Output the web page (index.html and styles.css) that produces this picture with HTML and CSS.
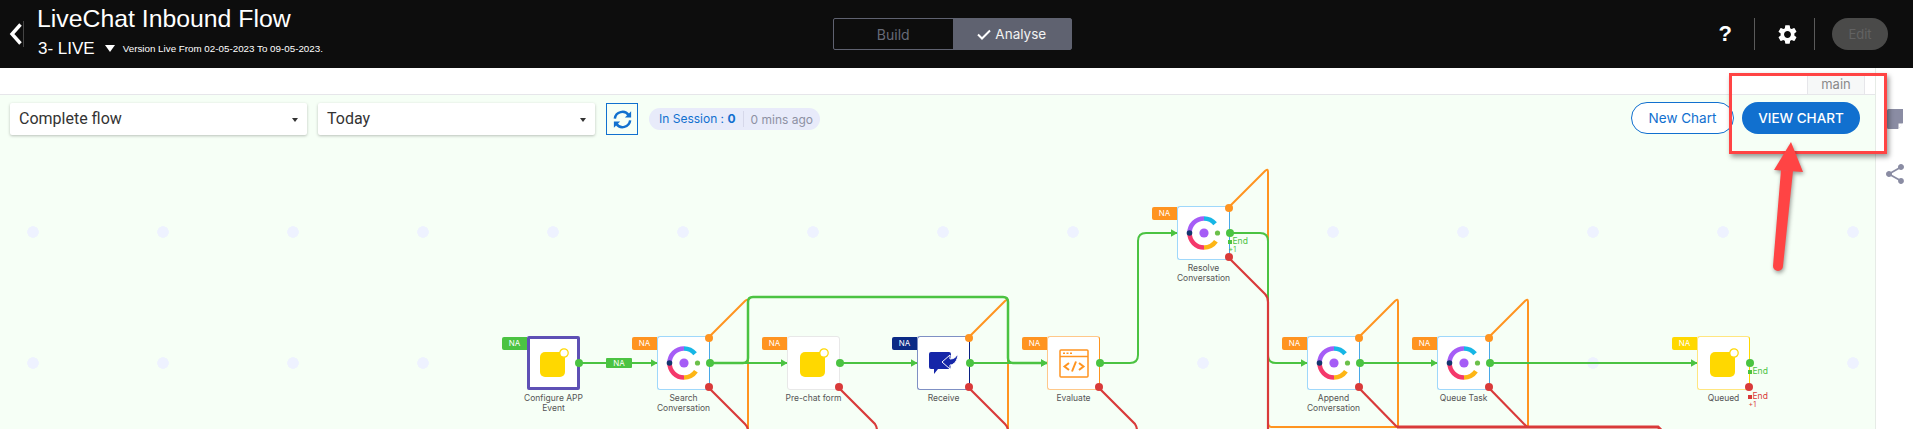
FILE: index.html
```html
<!doctype html>
<html lang="en">
<head>
    <meta charset="UTF-8">
    <title>LiveChat Inbound Flow</title>
    <link rel="stylesheet" href="styles.css">
</head>
<body>
    <svg class="defs" width="0" height="0">
        <symbol id="logo-c" viewBox="0 0 36 36">
            <g fill="none" stroke-width="4.6">
                <path d="M3.5 18A14.5 14.5 0 0 1 18 3.5" stroke="#a55cf6"/>
                <path d="M18 3.5A14.5 14.5 0 0 1 29.1 8.7" stroke="#17b6e6"/>
                <path d="M3.5 18A14.5 14.5 0 0 0 18 32.5" stroke="#f4396c"/>
                <path d="M18 32.5A14.5 14.5 0 0 0 29.9 26.3" stroke="#fdb515"/>
            </g>
            <circle cx="3.5" cy="18" r="2.8" fill="#12366f"/>
            <circle cx="18" cy="18" r="4.6" fill="#a55cf6"/>
            <circle cx="31.5" cy="18" r="2.6" fill="#6cc04a"/>
        </symbol>
        <symbol id="logo-app" viewBox="0 0 30 30">
            <rect x="1" y="4" width="25" height="25" rx="5" fill="#ffd800"/>
            <circle cx="25" cy="5" r="4.2" fill="#fff" stroke="#ffd800" stroke-width="1.2"/>
        </symbol>
        <marker id="arrow" markerUnits="userSpaceOnUse" markerWidth="7" markerHeight="8" refX="6.5" refY="4" orient="auto">
            <path d="M0 0L7 4L0 8Z" fill="#4bc342"/>
        </marker>
    </svg>

    <div class="app">
        <header class="topbar">
            <div class="flow-info">
                <svg class="back" viewBox="0 0 14 22" width="15" height="26">
                    <path d="M11.5 1.500L3 11L11.5 20.500" fill="none" stroke="#fff" stroke-width="3.4"/>
                </svg>
                <div class="flow-info__text">
                    <h1>LiveChat Inbound Flow</h1>
                    <div class="version">
                        <span class="version__name">3- LIVE</span>
                        <span class="version__caret"></span>
                        <span class="version__dates">Version Live From 02-05-2023 To 09-05-2023.</span>
                    </div>
                </div>
            </div>
            <div class="mode">
                <span class="mode__item">Build</span>
                <span class="mode__item mode__item--on">
                    <svg viewBox="0 0 14 11" width="14" height="11"><path d="M1 5.5L5 9.5L13 1.5" fill="none" stroke="#fff" stroke-width="2"/></svg>
                    Analyse
                </span>
            </div>
            <div class="tools">
                <span class="tools__help">?</span>
                <span class="tools__sep"></span>
                <svg class="tools__gear" viewBox="0 0 24 24" width="23" height="23">
                    <path fill="#fff" d="M19.14 12.94c.04-.3.06-.61.06-.94 0-.32-.02-.64-.07-.94l2.03-1.58a.49.49 0 0 0 .12-.61l-1.92-3.32a.488.488 0 0 0-.59-.22l-2.39.96c-.5-.38-1.03-.7-1.62-.94l-.36-2.54a.484.484 0 0 0-.48-.41h-3.84c-.24 0-.43.17-.47.41l-.36 2.54c-.59.24-1.13.57-1.62.94l-2.39-.96c-.22-.08-.47 0-.59.22L2.74 8.87c-.12.21-.08.47.12.61l2.03 1.58c-.05.3-.09.63-.09.94s.02.64.07.94l-2.03 1.58a.49.49 0 0 0-.12.61l1.92 3.32c.12.22.37.29.59.22l2.39-.96c.5.38 1.03.7 1.62.94l.36 2.54c.05.24.24.41.48.41h3.84c.24 0 .44-.17.47-.41l.36-2.54c.59-.24 1.13-.56 1.62-.94l2.39.96c.22.08.47 0 .59-.22l1.92-3.32c.12-.22.07-.47-.12-.61l-2.01-1.58zM12 15.6c-1.98 0-3.6-1.62-3.6-3.6s1.62-3.6 3.6-3.6 3.6 1.62 3.6 3.6-1.62 3.6-3.6 3.6z"/>
                </svg>
                <span class="tools__sep"></span>
                <span class="tools__edit">Edit</span>
            </div>
        </header>

        <div class="workspace">
            <div class="board">
                <div class="tabs"><span class="tabs__item">main</span></div>
                <main class="canvas">
                    <div class="toolbar">
                        <div class="select select--flow">Complete flow<span class="select__caret"></span></div>
                        <div class="select select--range">Today<span class="select__caret"></span></div>
                        <button type="button" class="refresh">
                            <svg viewBox="0 0 24 24" width="23" height="23" fill="none" stroke="#1170cf" stroke-width="2.6">
                                <path d="M4 11A8 8 0 0 1 18.5 7.5"/>
                                <path d="M20 13A8 8 0 0 1 5.5 16.5"/>
                                <path d="M21 3.5V10H14.500Z" fill="#1170cf" stroke="none"/>
                                <path d="M3 20.500V14H9.500Z" fill="#1170cf" stroke="none"/>
                            </svg>
                        </button>
                        <div class="session">
                            <span class="session__count">In Session : <b>0</b></span>
                            <span class="session__ago">0 mins ago</span>
                        </div>
                        <button type="button" class="btn btn--outline">New Chart</button>
                        <button type="button" class="btn btn--solid">VIEW CHART</button>
                    </div>
                </main>
            </div>
            <aside class="rail">
                <svg viewBox="0 0 16 20" width="16" height="20">
                    <path d="M0 1.5A1.5 1.5 0 0 1 1.5 0H16V14L11 20H1.5A1.5 1.5 0 0 1 0 18.5Z" fill="#8a8ca3"/>
                    <path d="M11.5 19.5V14.5H16Z" fill="#fff"/>
                </svg>
                <svg viewBox="0 0 24 24" width="24" height="24">
                    <path fill="#8a8ca3" d="M18 16.08c-.76 0-1.44.3-1.96.77L8.91 12.7c.05-.23.09-.46.09-.7s-.04-.47-.09-.7l7.05-4.11c.54.5 1.25.81 2.04.81 1.66 0 3-1.34 3-3s-1.34-3-3-3-3 1.34-3 3c0 .24.04.47.09.7L8.04 9.81C7.5 9.31 6.79 9 6 9c-1.66 0-3 1.34-3 3s1.34 3 3 3c.79 0 1.5-.31 2.04-.81l7.12 4.16c-.05.21-.08.43-.08.65 0 1.61 1.31 2.92 2.92 2.92 1.61 0 2.92-1.31 2.92-2.92s-1.31-2.92-2.92-2.92z"/>
                </svg>
            </aside>
        </div>

        <!-- flow diagram, coordinates are page pixels -->
        <svg class="wires" viewBox="0 0 1913 429" width="1913" height="429" fill="none">
            <g stroke="#ff9420" stroke-width="2">
                <path d="M708 338L745 301Q748 298 748 302V429"/>
                <path d="M968 338L1005 301Q1008 298 1008 302V429"/>
                <path d="M1228 208L1265 171Q1268 168 1268 172V423Q1268 427 1272 427H1398"/>
                <path d="M1358 338L1395 301Q1398 298 1398 302V427"/>
                <path d="M1488 338L1525 301Q1528 298 1528 302V427"/>
            </g>
            <g stroke="#4bc342" stroke-width="2">
                <path d="M579 363H657" marker-end="url(#arrow)"/>
                <path d="M709 363H787" marker-end="url(#arrow)"/>
                <path d="M709 363H743Q748 363 748 358V302Q748 297 753 297H1003Q1008 297 1008 302V358Q1008 363 1013 363H1047" stroke-width="2.5" marker-end="url(#arrow)"/>
                <path d="M839 363H917" marker-end="url(#arrow)"/>
                <path d="M969 363H1047" marker-end="url(#arrow)"/>
                <path d="M1099 363H1130Q1138 363 1138 355V241Q1138 233 1146 233H1177" marker-end="url(#arrow)"/>
                <path d="M1229 233H1260Q1268 233 1268 241V355Q1268 363 1276 363H1307" marker-end="url(#arrow)"/>
                <path d="M1359 363H1437" marker-end="url(#arrow)"/>
                <path d="M1489 363H1697" marker-end="url(#arrow)"/>
            </g>
            <g stroke="#d93a3a" stroke-width="2.2">
                <path d="M708 387L745 424Q748 427 748 431"/>
                <path d="M838 387L875 424Q877 427 877 431"/>
                <path d="M968 387L1005 424Q1008 427 1008 431"/>
                <path d="M1098 387L1135 424Q1137 427 1137 431"/>
                <path d="M1228 257L1265 294Q1268 297 1268 302V429"/>
                <path d="M1358 387L1397 427"/>
                <path d="M1488 387L1527 427"/>
                <path d="M1397 427H1658L1662 431" stroke-width="3"/>
            </g>
        </svg>

        <div class="node node--configure">
            <span class="badge badge--green">NA</span>
            <div class="node__box node__box--selected">
                <svg width="30" height="30"><use href="#logo-app"/></svg>
                <span class="port port--ok"></span>
            </div>
            <p class="node__label">Configure APP Event</p>
        </div>
        <span class="wire-tag">NA</span>

        <div class="node node--search">
            <span class="badge badge--orange">NA</span>
            <div class="node__box node__box--blue">
                <svg width="36" height="36"><use href="#logo-c"/></svg>
                <span class="port port--warn"></span><span class="port port--ok"></span><span class="port port--err"></span>
            </div>
            <p class="node__label">Search Conversation</p>
        </div>

        <div class="node node--prechat">
            <span class="badge badge--orange">NA</span>
            <div class="node__box node__box--grey">
                <svg width="30" height="30"><use href="#logo-app"/></svg>
                <span class="port port--ok"></span><span class="port port--err"></span>
            </div>
            <p class="node__label">Pre-chat form</p>
        </div>

        <div class="node node--receive">
            <span class="badge badge--navy">NA</span>
            <div class="node__box node__box--navy">
                <svg viewBox="0 0 29 22" width="29" height="22">
                    <path d="M0 2Q0 0 2 0H20Q22 0 22 2V15Q22 17 20 17H9L5 22V17H2Q0 17 0 15Z" fill="#1526a8"/>
                    <path d="M13 10L21 3V7C25 7 27 5 29 2C28.500 9 25 13 21 13V17Z" fill="#1526a8" stroke="#fff" stroke-width="1"/>
                </svg>
                <span class="port port--warn"></span><span class="port port--ok"></span><span class="port port--err"></span>
            </div>
            <p class="node__label">Receive</p>
        </div>

        <div class="node node--evaluate">
            <span class="badge badge--orange">NA</span>
            <div class="node__box node__box--orange">
                <svg viewBox="0 0 30 29" width="30" height="29" fill="none" stroke="#ff9420" stroke-width="1.500">
                    <rect x="1" y="1" width="28" height="27" rx="1"/>
                    <path d="M1 7.500H29"/>
                    <path d="M4 4.300H6M7.500 4.300H9.500M11 4.300H13"/>
                    <path d="M10 14L5.500 17.500L10 21M20 14L24.500 17.500L20 21M17 12.500L13 22.500" stroke-width="2"/>
                </svg>
                <span class="port port--ok"></span><span class="port port--err"></span>
            </div>
            <p class="node__label">Evaluate</p>
        </div>

        <div class="node node--resolve">
            <span class="badge badge--orange">NA</span>
            <div class="node__box node__box--blue">
                <svg width="36" height="36"><use href="#logo-c"/></svg>
                <span class="port port--warn"></span><span class="port port--ok"></span><span class="port port--err"></span>
                <span class="end end--ok">End<small>+1</small></span>
            </div>
            <p class="node__label">Resolve Conversation</p>
        </div>

        <div class="node node--append">
            <span class="badge badge--orange">NA</span>
            <div class="node__box node__box--blue">
                <svg width="36" height="36"><use href="#logo-c"/></svg>
                <span class="port port--warn"></span><span class="port port--ok"></span><span class="port port--err"></span>
            </div>
            <p class="node__label">Append Conversation</p>
        </div>

        <div class="node node--queue">
            <span class="badge badge--orange">NA</span>
            <div class="node__box node__box--blue">
                <svg width="36" height="36"><use href="#logo-c"/></svg>
                <span class="port port--warn"></span><span class="port port--ok"></span><span class="port port--err"></span>
            </div>
            <p class="node__label">Queue Task</p>
        </div>

        <div class="node node--queued">
            <span class="badge badge--yellow">NA</span>
            <div class="node__box node__box--yellow">
                <svg width="30" height="30"><use href="#logo-app"/></svg>
                <span class="port port--ok"></span><span class="port port--err"></span>
                <span class="end end--ok">End</span>
                <span class="end end--err">End<small>+1</small></span>
            </div>
            <p class="node__label">Queued</p>
        </div>

        <!-- red annotation drawn over the screenshot -->
        <div class="callout"></div>
        <svg class="callout-arrow" viewBox="0 0 50 140" width="50" height="140">
            <path d="M26 1L38 31L9 29Z" fill="#ff4444"/>
            <path d="M16 29L28 30L18 125A5 5 0 0 1 8 125Z" fill="#ff4444"/>
        </svg>
    </div>
</body>
</html>
```

FILE: styles.css
```css
* {
    box-sizing: border-box;
}

body {
    margin: 0;
    font-family: Inter, "Noto Sans", sans-serif;
}

.defs {
    position: absolute;
}

.app {
    position: relative;
    height: 100vh;
    overflow: hidden;
    display: flex;
    flex-direction: column;
}

/* top bar */
.topbar {
    height: 68px;
    flex: none;
    background-color: #0d0d0d;
    display: grid;
    grid-template-columns: 833px 239px 1fr;
    align-items: center;
    color: #fff;
}

.flow-info {
    display: flex;
    align-items: center;
    height: 100%;
    padding-left: 9px;
    font-family: "Liberation Sans", Arial, sans-serif;
}

.back {
    margin-right: 13px;
    border-right: 1px solid #444;
}

.flow-info__text {
    margin-bottom: 7px;
}

.flow-info h1 {
    margin: 0;
    font-size: 24.8px;
    font-weight: 400;
    line-height: 30px;
}

.version {
    display: flex;
    align-items: center;
    margin-top: 6px;
    line-height: 18px;
}

.version__name {
    font-size: 17px;
    margin-left: 1px;
}

.version__caret {
    margin: 0 8px 0 10px;
    border-left: 5.500px solid transparent;
    border-right: 5.500px solid transparent;
    border-top: 7px solid #fff;
}

.version__dates {
    font-size: 9.8px;
}

.mode {
    height: 32px;
    display: flex;
    border: 1px solid #5f6270;
    border-radius: 2px;
    font-size: 14px;
}

.mode__item {
    flex: 1;
    display: flex;
    align-items: center;
    justify-content: center;
    gap: 4px;
    color: #666a78;
}

.mode__item--on {
    background-color: #5f6270;
    color: #f2f2f2;
    font-size: 13.500px;
}

.tools {
    display: flex;
    align-items: center;
    justify-content: flex-end;
    padding-right: 25px;
}

.tools__help {
    font-family: "Liberation Sans", Arial, sans-serif;
    font-size: 22px;
    font-weight: 700;
    margin-right: 22px;
}

.tools__sep {
    width: 1px;
    height: 32px;
    background-color: #5a5a5a;
}

.tools__gear {
    margin: 0 15px 0 21px;
}

.tools__edit {
    width: 56px;
    height: 32px;
    margin-left: 17px;
    border-radius: 16px;
    background-color: #4a4a49;
    color: #626262;
    font-size: 13px;
    display: flex;
    align-items: center;
    justify-content: center;
}

/* work area */
.workspace {
    flex: 1;
    display: flex;
    min-height: 0;
}

.board {
    flex: 1;
    display: flex;
    flex-direction: column;
    border-right: 1px solid #e6ebe6;
}

.tabs {
    height: 27px;
    flex: none;
    display: flex;
    justify-content: flex-end;
    align-items: flex-end;
    padding: 0 10px 0 0;
    border-bottom: 1px solid #e6e6ea;
}

.tabs__item {
    width: 58px;
    height: 20px;
    background-color: #f6f8f8;
    border: 1px solid #e6e6ea;
    border-top-color: #b9d3ec;
    border-bottom: 0;
    color: #8a8a8a;
    font-size: 13px;
    line-height: 19px;
    text-align: center;
}

.canvas {
    flex: 1;
    background-color: #f6fff6;
    background-image:
        radial-gradient(circle, #eef2ff 5.500px, transparent 6px),
        radial-gradient(circle, #eef2ff 5.500px, transparent 6px);
    background-size: 130px 14px;
    background-position: -32px 130px, -32px 261px;
    background-repeat: repeat-x;
}

.toolbar {
    display: flex;
    align-items: flex-start;
    gap: 11px;
    padding: 7px 15px 0 10px;
}

.select {
    position: relative;
    height: 32px;
    margin-top: 1px;
    padding-left: 9px;
    background-color: #fff;
    box-shadow: 0 1px 3px rgba(0, 0, 0, 0.25);
    border-radius: 2px;
    font-family: Roboto, sans-serif;
    font-size: 16px;
    line-height: 32px;
    color: #333;
}

.select--flow {
    width: 297px;
}

.select--range {
    width: 277px;
}

.select__caret {
    position: absolute;
    right: 9px;
    top: 15px;
    border-left: 3.500px solid transparent;
    border-right: 3.500px solid transparent;
    border-top: 4px solid #333;
}

.refresh {
    width: 32px;
    height: 32px;
    margin-top: 1px;
    padding: 0;
    display: flex;
    align-items: center;
    justify-content: center;
    background-color: transparent;
    border: 1px solid #1170cf;
}

.session {
    width: 171px;
    height: 22px;
    margin-top: 6px;
    display: flex;
    align-items: center;
    background-color: #e8ebfa;
    border-radius: 11px;
    font-size: 12px;
    white-space: nowrap;
    margin-right: auto;
}

.session__count {
    padding: 0 7px 0 10px;
    line-height: 16px;
    color: #1170cf;
    border-right: 1px solid #d6d8ea;
}

.session__ago {
    padding-left: 7px;
    color: #8d91a3;
}

.btn {
    height: 32px;
    border-radius: 16px;
    font-family: Inter, sans-serif;
    font-size: 13.500px;
    padding: 0;
}

.btn--outline {
    width: 103px;
    background-color: #fff;
    border: 1px solid #1170cf;
    color: #1170cf;
    margin-right: -3px;
}

.btn--solid {
    width: 118px;
    background-color: #1170cf;
    border: 0;
    color: #fff;
    font-weight: 500;
}

.rail {
    width: 37px;
    flex: none;
    display: flex;
    flex-direction: column;
    align-items: center;
    gap: 33px;
    padding-top: 41px;
}

/* diagram */
.wires {
    position: absolute;
    left: 0;
    top: 0;
}

.node {
    position: absolute;
    width: 53px;
    display: flex;
    flex-direction: column;
    align-items: center;
}

.node--configure { left: 527px; top: 336px; }
.node--search { left: 657px; top: 336px; }
.node--prechat { left: 787px; top: 336px; }
.node--receive { left: 917px; top: 336px; }
.node--evaluate { left: 1047px; top: 336px; }
.node--resolve { left: 1177px; top: 206px; }
.node--append { left: 1307px; top: 336px; }
.node--queue { left: 1437px; top: 336px; }
.node--queued { left: 1697px; top: 336px; }

.node__box {
    position: relative;
    width: 53px;
    height: 54px;
    flex: none;
    display: flex;
    align-items: center;
    justify-content: center;
    background-color: #fff;
    border: 1.500px solid #e8e8e8;
    border-radius: 3px;
}

.node__box--selected {
    border: 3px solid #5e50b5;
    border-radius: 2px;
}

.node__box--grey { border-color: #e8e8e8; }
.node__box--blue { border-color: #9fd8fb; border-right-color: #4aa8e8; }
.node__box--navy { border-color: #7f90c4; border-right-color: #0a2083; }
.node__box--orange { border-color: #ffc88a; border-right-color: #ff9420; }
.node__box--yellow { border-color: #ffe680; border-right-color: #ffd800; }

.node__label {
    width: 68px;
    margin: 3px 0 0;
    font-size: 8.500px;
    line-height: 10px;
    text-align: center;
    color: #555;
}

.badge {
    position: absolute;
    left: -25px;
    top: 1px;
    width: 25px;
    height: 13px;
    border-radius: 2px 0 0 2px;
    color: #fff;
    font-size: 8px;
    line-height: 13px;
    text-align: center;
}

.badge--green { background-color: #4bc342; }
.badge--orange { background-color: #ff9420; }
.badge--navy { background-color: #0b2a85; }
.badge--yellow { background-color: #ffd800; }

.wire-tag {
    position: absolute;
    left: 606px;
    top: 358px;
    width: 26px;
    height: 10px;
    background-color: #4bc342;
    color: #fff;
    font-size: 8px;
    line-height: 10px;
    text-align: center;
    border-radius: 1px;
}

.port {
    position: absolute;
    right: -4px;
    width: 8px;
    height: 8px;
    border-radius: 50%;
}

.port--warn { top: -3px; background-color: #ff9420; }
.port--ok { top: 22px; right: -5px; background-color: #4bc342; }
.port--err { top: 46px; background-color: #d93a3a; }

.node__box--selected .port--ok { top: 20px; right: -6px; }

.end {
    position: absolute;
    left: 54.500px;
    font-size: 8.500px;
    line-height: 9px;
    white-space: nowrap;
}

.end::before {
    content: "";
    position: absolute;
    left: -5px;
    top: 3px;
    width: 4px;
    height: 4px;
    background-color: currentColor;
}

.end small {
    display: block;
    margin-left: -4px;
    font-size: 7px;
    line-height: 8px;
}

.end--ok { top: 30px; color: #4bc342; }
.end--err { top: 55px; color: #d93a3a; }

/* annotation */
.callout {
    position: absolute;
    left: 1729px;
    top: 73px;
    width: 158px;
    height: 81px;
    border: 3px solid #ff4444;
    box-shadow: 2px 3px 5px rgba(0, 0, 0, 0.4);
}

.callout-arrow {
    position: absolute;
    left: 1765px;
    top: 141px;
    filter: drop-shadow(1px 2px 2px rgba(0, 0, 0, 0.4));
}
```
